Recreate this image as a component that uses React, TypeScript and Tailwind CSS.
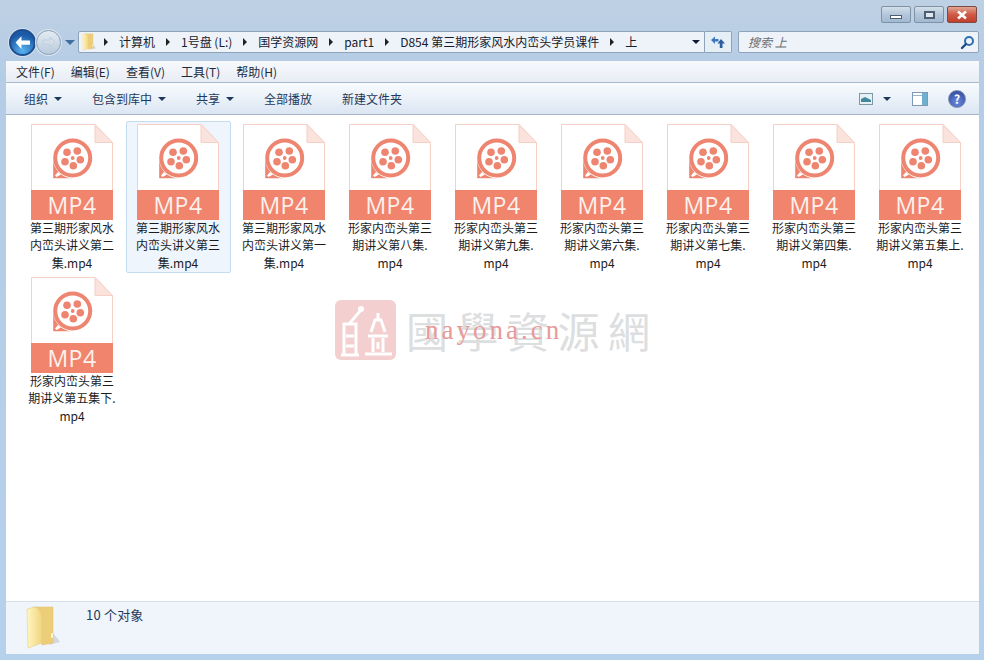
const CJK = "font-['Noto_Sans_CJK_SC','Noto_Sans',sans-serif]";

const FILES = [
  ["第三期形家风水", "内峦头讲义第二", "集.mp4"],
  ["第三期形家风水", "内峦头讲义第三", "集.mp4"],
  ["第三期形家风水", "内峦头讲义第一", "集.mp4"],
  ["形家内峦头第三", "期讲义第八集.", "mp4"],
  ["形家内峦头第三", "期讲义第九集.", "mp4"],
  ["形家内峦头第三", "期讲义第六集.", "mp4"],
  ["形家内峦头第三", "期讲义第七集.", "mp4"],
  ["形家内峦头第三", "期讲义第四集.", "mp4"],
  ["形家内峦头第三", "期讲义第五集上.", "mp4"],
  ["形家内峦头第三", "期讲义第五集下.", "mp4"],
];

const CRUMBS = ["计算机", "1号盘 (L:)", "国学资源网", "part1", "D854 第三期形家风水内峦头学员课件", "上"];
const MENUS = ["文件(F)", "编辑(E)", "查看(V)", "工具(T)", "帮助(H)"];

function Mp4Icon() {
  return (
    <div className="flex h-[96px] w-[82px] flex-col">
      <svg width="82" height="66" viewBox="0 0 82 66" className="block">
        <path d="M0.5 66V0.5H64L81.5 18.5V66" fill="#fff" stroke="#f6cfc5" />
        <path d="M64 0.5V18.5H81.5Z" fill="#fbe3dd" stroke="#f6cfc5" />
        <path d="M22.2 34V54.2H41.7A19.5 19.5 0 0 1 22.2 34Z" fill="#ee8570" />
        <circle cx="41.7" cy="34" r="17.5" fill="#fff" stroke="#ee8570" strokeWidth="4" />
        <path d="M24 51.5l3-3.5 3 2.5-4.5 2.5Z" fill="#fff" />
        <circle cx="36" cy="28.3" r="3.8" fill="#ee8570" />
        <circle cx="46.3" cy="27" r="3.8" fill="#ee8570" />
        <circle cx="49.3" cy="35.7" r="3.8" fill="#ee8570" />
        <circle cx="42.3" cy="41.7" r="3.8" fill="#ee8570" />
        <circle cx="34" cy="37.7" r="3.8" fill="#ee8570" />
        <circle cx="41.7" cy="34" r="1.9" fill="#ee8570" />
      </svg>
      <div className="flex h-[30px] items-center justify-center bg-[#f0846d] pl-[1px] font-['Open_Sans',sans-serif] text-[23px] leading-none font-medium tracking-[0.5px] text-[#fdf1ec]">
        MP4
      </div>
    </div>
  );
}

function FileItem({ lines, selected }: { lines: string[]; selected?: boolean }) {
  return (
    <div
      className={`flex h-[152px] w-[105px] flex-col items-center rounded-[2px] border pt-[2px] pr-[2px] ${
        selected ? "border-[#c5dcee] bg-[#eef5fc]" : "border-transparent"
      }`}
    >
      <Mp4Icon />
      <div className="-mt-[1px] w-[102px] pl-[1px] text-center text-[12px] leading-[17.4px] whitespace-nowrap text-[#1c1c1c]">
        {lines.map((l) => (
          <div key={l}>{l}</div>
        ))}
      </div>
    </div>
  );
}

function Folder({ size }: { size: "sm" | "lg" }) {
  const w = size === "sm" ? 16 : 36;
  const h = size === "sm" ? 18 : 44;
  return (
    <svg width={w} height={h} viewBox="0 0 36 44" className="block shrink-0">
      <defs>
        <linearGradient id={`f-${size}`} x1="0" x2="1" y1="0" y2="0">
          <stop offset="0" stopColor="#fff6c0" />
          <stop offset="1" stopColor="#f1d47f" />
        </linearGradient>
      </defs>
      <path d="M28 28L35 37L24 40Z" fill="#a8adb5" opacity="0.4" />
      <path d="M8 2H28V38L17 40Z" fill="#eccd78" stroke="#dcc177" strokeWidth="0.5" />
      <path d="M2 4L10 2C14 4 17 8 17 12V38L3 43Z" fill={`url(#f-${size})`} stroke="#e0c983" strokeWidth="0.5" />
      <rect x="26" y="28" width="2" height="5" rx="1" fill="#fdf5d2" />
    </svg>
  );
}

function Caret() {
  return <span className="ml-[6px] inline-block h-0 w-0 border-x-[4px] border-t-[4px] border-x-transparent border-t-[#1e395b]" />;
}

function CrumbArrow() {
  return <span className="inline-block h-0 w-0 border-y-[4px] border-l-[4px] border-y-transparent border-l-[#222]" />;
}

function NavButtons() {
  return (
    <div className="flex items-center">
      <div className="flex h-[27px] w-[27px] items-center justify-center rounded-full border-2 border-[#1f4f8f] bg-[radial-gradient(circle_at_50%_85%,#5ab4f0,#1c5aa8_70%)] shadow-[0_0_0_1px_#d5e2ee]">
        <svg width="17" height="15" viewBox="0 0 16 14">
          <path d="M7 1L1.5 7L7 13V9H15V5H7Z" fill="#fff" />
        </svg>
      </div>
      <div className="flex h-[25px] w-[25px] items-center justify-center rounded-full border border-[#8fa5bb] bg-[linear-gradient(#e3ebf3,#b9cbdc)] shadow-[0_0_0_1px_#dbe6f0]">
        <svg width="14" height="12" viewBox="0 0 14 12">
          <path d="M8 1L13 6L8 11V8H1V4H8Z" fill="#d3dee9" stroke="#b0c0d0" strokeWidth="0.5" />
        </svg>
      </div>
      <span className="ml-[4px] h-0 w-0 border-x-[5px] border-t-[5px] border-x-transparent border-t-[#3f6f9f]" />
    </div>
  );
}

function WindowButtons() {
  return (
    <div className="flex justify-end gap-[3px] pt-[6px] pr-[7px]">
      <div className="flex h-[17px] w-[30px] items-end justify-center rounded-[2px] border border-[#7f93a8] bg-[linear-gradient(#d4dfea,#b4c6d9_50%,#a2b9d1)] pb-[3px]">
        <span className="h-[4px] w-[12px] border border-[#4c5e70] bg-white" />
      </div>
      <div className="flex h-[17px] w-[30px] items-center justify-center rounded-[2px] border border-[#7f93a8] bg-[linear-gradient(#d4dfea,#b4c6d9_50%,#a2b9d1)]">
        <span className="h-[8px] w-[11px] border-2 border-[#4c5e70] bg-[#dfe8f1]" />
      </div>
      <div className="flex h-[17px] w-[30px] items-center justify-center rounded-[2px] border border-[#7c4a42] bg-[linear-gradient(#e2a595,#cf5a45_50%,#c0402c)]">
        <svg width="12" height="10" viewBox="0 0 12 10">
          <path d="M2 1.5L10 8.5M10 1.5L2 8.5" stroke="#fff" strokeWidth="2.6" />
        </svg>
      </div>
    </div>
  );
}

function AddressRow() {
  return (
    <div className="mt-[8px] flex h-[22px] items-center pl-[9px]">
      <NavButtons />
      <div className="ml-[3px] flex h-[22px] w-[627px] items-center rounded-l-[2px] border border-[#8ea3b8] bg-[#eef3f9] pb-[1px] pl-[2px] text-[12px] text-[#15202c]">
        <Folder size="sm" />
        <div className="ml-[7px] flex items-center whitespace-nowrap">
          {CRUMBS.map((c) => (
            <div key={c} className="flex items-center">
              <CrumbArrow />
              <span className="mx-[11px] leading-none first:ml-[10.5px]">{c}</span>
            </div>
          ))}
        </div>
        <span className="mr-[4px] ml-auto h-0 w-0 border-x-[4px] border-t-[4px] border-x-transparent border-t-[#111a33]" />
      </div>
      <div className="flex h-[22px] w-[27px] items-center justify-center rounded-r-[2px] border border-l-0 border-[#8ea3b8] bg-[#e6eef6]">
        <svg width="16" height="14" viewBox="0 0 16 14">
          <path d="M1 5L5 1.5V4H8.5V6.5H5V9Z" fill="#3f78c0" />
          <path d="M11 4L15 8.5H12.5V13H9.8V8.5H7.5Z" fill="#2d5f9f" />
        </svg>
      </div>
      <div className="ml-[6px] flex h-[22px] w-[241px] items-center justify-between rounded-[2px] border border-[#8ea3b8] bg-[#eef3f9] pr-[3px] pl-[9px] text-[12px] text-[#6d6d6d] italic">
        <span>搜索 上</span>
        <svg width="15" height="15" viewBox="0 0 15 15">
          <circle cx="9" cy="6" r="4" fill="none" stroke="#2f6fb0" strokeWidth="2" />
          <path d="M6 9L2 13" stroke="#1d4d80" strokeWidth="2.4" strokeLinecap="round" />
        </svg>
      </div>
    </div>
  );
}

function Toolbar() {
  return (
    <div className="flex h-[32px] items-center justify-between border-b border-[#a3b5c7] bg-[linear-gradient(#f8fbfe,#ecf2f9_45%,#dbe6f3)] pt-[1px] pr-[13px] pl-[18px] text-[12px] text-[#1e395b]">
      <div className="flex items-center">
        <div className="flex w-[68px] items-center">组织<Caret /></div>
        <div className="flex w-[104px] items-center">包含到库中<Caret /></div>
        <div className="flex w-[68px] items-center">共享<Caret /></div>
        <div className="w-[78px]">全部播放</div>
        <div>新建文件夹</div>
      </div>
      <div className="flex items-center">
        <svg width="14" height="12" viewBox="0 0 14 12">
          <rect x="0.5" y="0.5" width="13" height="11" fill="#e6f0f5" stroke="#7f98a8" />
          <path d="M2 9L2 6L6 4L12 7V9Z" fill="#3f8a9a" />
        </svg>
        <span className="ml-[10px] h-0 w-0 border-x-[4px] border-t-[4px] border-x-transparent border-t-[#1e395b]" />
        <svg width="16" height="14" viewBox="0 0 16 14" className="ml-[21px]">
          <rect x="0.5" y="0.5" width="15" height="13" fill="#fff" stroke="#7d99b3" />
          <rect x="10" y="1" width="5" height="12" fill="#6fb0cf" />
          <path d="M1 3.5H10" stroke="#9ab4c9" />
        </svg>
        <div className="ml-[20px] flex h-[18px] w-[18px] items-center justify-center rounded-full border border-[#8090b8] bg-[radial-gradient(circle_at_50%_70%,#6c8ee0,#2a3f8f)] text-[12px] leading-none font-bold text-white">
          ?
        </div>
      </div>
    </div>
  );
}

function Watermark() {
  return (
    <div className="pointer-events-none absolute top-[185px] left-[329px] flex items-center">
      <svg width="61" height="60" viewBox="0 0 61 60">
        <rect width="61" height="60" rx="6" fill="#f3cfcf" />
        <g stroke="#fff" strokeWidth="3" fill="none">
          <path d="M6 55H24M9 55V24H21V55M11 36H19M11 46H19M14 24L26 10" />
          <path d="M43 13V19M36 32L40 20H46L50 32M33 36H53M38 38V52M48 38V52M43 42V49M30 54H57" />
        </g>
        <circle cx="26" cy="9" r="3" fill="#fff" />
      </svg>
      <div className="ml-[10px] font-['Noto_Sans_CJK_TC',sans-serif] text-[42px] leading-none font-normal tracking-[8.5px] text-[#dcdee0]">
        國學資源網
      </div>
      <div className="absolute top-[17px] left-[90px] font-['Liberation_Serif',serif] text-[27px] leading-none tracking-[3px] text-[#e89a9a]">
        nayona.cn
      </div>
    </div>
  );
}

export default function App() {
  return (
    <div className={`flex h-[660px] w-[984px] flex-col overflow-hidden bg-[linear-gradient(#bed0e3,#b4cce6_12%,#b6d1ec)] ${CJK}`}>
      <WindowButtons />
      <AddressRow />
      <div className="mt-[8px] mr-[5px] ml-[6px] flex flex-1 flex-col">
        <div className="flex h-[22px] items-center gap-[16px] border-b border-[#a9bacb] bg-[linear-gradient(#f7f9fc,#e8edf5)] pt-[1px] pl-[10px] text-[12px] text-[#1c2a3a]">
          {MENUS.map((m) => (
            <span key={m}>{m}</span>
          ))}
        </div>
        <Toolbar />
        <div className="relative h-[486px] bg-white pt-[6px] pl-[14px]">
          <div className="grid grid-cols-[repeat(9,105px)] gap-x-[1px] gap-y-[1px]">
            {FILES.map((f, i) => (
              <FileItem key={i} lines={f} selected={i === 1} />
            ))}
          </div>
          <Watermark />
        </div>
        <div className="flex h-[53px] items-start border-t border-[#d6dfe8] bg-[#f0f4fb] pl-[19px]">
          <div className="mt-[3px]">
            <Folder size="lg" />
          </div>
          <span className="mt-[3px] ml-[25px] text-[13px] tracking-[0.2px] text-[#1e395b]">10 个对象</span>
        </div>
      </div>
    </div>
  );
}
